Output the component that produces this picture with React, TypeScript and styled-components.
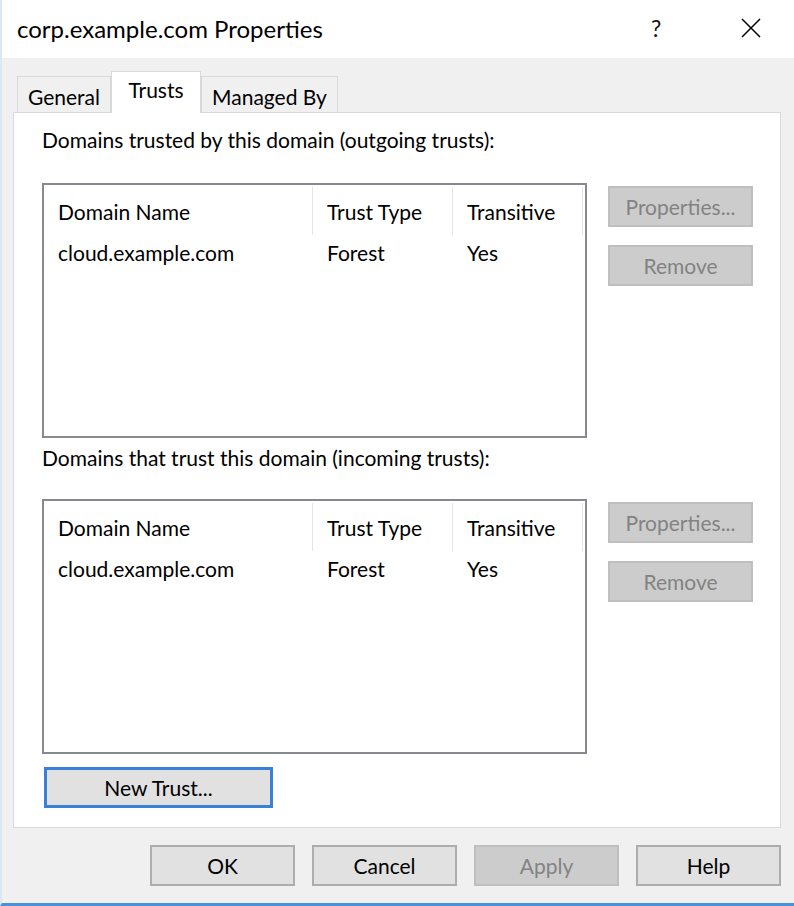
import React from 'react';
import styled, { createGlobalStyle } from 'styled-components';

const GlobalStyle = createGlobalStyle`
  html, body {
    margin: 0;
    padding: 0;
    background: #ffffff;
  }
  body {
    font-family: Lato, 'Liberation Sans', sans-serif;
    color: #000;
  }
  * {
    box-sizing: border-box;
  }
`;

type TrustRow = { name: string; type: string; transitive: string };

const outgoing: TrustRow[] = [{ name: 'cloud.example.com', type: 'Forest', transitive: 'Yes' }];
const incoming: TrustRow[] = [{ name: 'cloud.example.com', type: 'Forest', transitive: 'Yes' }];

const CloseIcon = () => (
  <svg width="20" height="20" viewBox="0 0 20 20">
    <path d="M1 1 L19 19 M19 1 L1 19" stroke="#000" strokeWidth="1.5" fill="none" />
  </svg>
);

const TrustList: React.FC<{ rows: TrustRow[] }> = ({ rows }) => (
  <ListBox>
    <HeaderRow>
      <HeaderCell $w={269}>Domain Name</HeaderCell>
      <HeaderCell $w={140}>Trust Type</HeaderCell>
      <HeaderCell $w={130}>Transitive</HeaderCell>
    </HeaderRow>
    {rows.map((r) => (
      <DataRow key={r.name}>
        <DataCell $w={269}>{r.name}</DataCell>
        <DataCell $w={140}>{r.type}</DataCell>
        <DataCell $w={130}>{r.transitive}</DataCell>
      </DataRow>
    ))}
  </ListBox>
);

const TrustSection: React.FC<{ rows: TrustRow[] }> = ({ rows }) => (
  <SectionRow>
    <TrustList rows={rows} />
    <SideButtons>
      <Button $disabled>Properties...</Button>
      <Button $disabled>Remove</Button>
    </SideButtons>
  </SectionRow>
);

const App: React.FC = () => {
  return (
    <>
      <GlobalStyle />
      <Window>
        <TitleBar>
          <Title>corp.example.com Properties</Title>
          <TitleControls>
            <HelpMark>?</HelpMark>
            <CloseBox>
              <CloseIcon />
            </CloseBox>
          </TitleControls>
        </TitleBar>
        <Body>
          <Tabs>
            <Tab $w={94}>General</Tab>
            <Tab $w={90} $active>
              Trusts
            </Tab>
            <Tab $w={137}>Managed By</Tab>
          </Tabs>
          <Panel>
            <Label>Domains trusted by this domain (outgoing trusts):</Label>
            <TrustSection rows={outgoing} />
            <Label $second>Domains that trust this domain (incoming trusts):</Label>
            <TrustSection rows={incoming} />
            <NewTrustButton>New Trust...</NewTrustButton>
          </Panel>
          <Footer>
            <Button>OK</Button>
            <Button>Cancel</Button>
            <Button $disabled>Apply</Button>
            <Button>Help</Button>
          </Footer>
        </Body>
      </Window>
    </>
  );
};

export default App;

// 창 전체
const Window = styled.div`
  width: 794px;
  height: 906px;
  display: flex;
  flex-direction: column;
  border-left: 2px solid #dbe7f4;
  border-bottom: 3px solid #4a90da;
  font-size: 21px;
`;

// 타이틀 바
const TitleBar = styled.div`
  height: 58px;
  flex-shrink: 0;
  background: #ffffff;
  display: flex;
  align-items: center;
  justify-content: space-between;
  padding: 0 33px 2px 15px;
`;

const Title = styled.div`
  font-size: 24px;
  color: #000;
`;

const TitleControls = styled.div`
  display: flex;
  align-items: center;
  gap: 80px;
`;

const HelpMark = styled.span`
  font-size: 23px;
  width: 10px;
  color: #111;
`;

const CloseBox = styled.span`
  display: flex;
  width: 20px;
  height: 20px;
`;

// 본문
const Body = styled.div`
  flex: 1;
  background: #f0f0f0;
  padding: 14px 13px 0 11px;
  display: flex;
  flex-direction: column;
`;

// 탭
const Tabs = styled.div`
  display: flex;
  align-items: flex-end;
  height: 41px;
  padding-left: 4px;
  margin-bottom: -1px;
  position: relative;
  z-index: 1;
`;

const Tab = styled.div<{ $active?: boolean; $w: number }>`
  width: ${(p) => p.$w}px;
  height: ${(p) => (p.$active ? '42px' : '37px')};
  padding-top: ${(p) => (p.$active ? '3px' : '5px')};
  text-align: center;
  background: ${(p) => (p.$active ? '#ffffff' : '#f0f0f0')};
  border: 1px solid #d9d9d9;
  border-bottom: ${(p) => (p.$active ? 'none' : '1px solid #d9d9d9')};
  position: relative;
  z-index: ${(p) => (p.$active ? 2 : 1)};
  line-height: 30px;
  font-size: 21px;
`;

// 탭 패널
const Panel = styled.div`
  width: 768px;
  height: 716px;
  background: #ffffff;
  border: 1px solid #d9d9d9;
  padding: 14px 0 0 28px;
  display: flex;
  flex-direction: column;
`;

const Label = styled.div<{ $second?: boolean }>`
  height: 26px;
  line-height: 26px;
  font-size: 21px;
  margin-top: ${(p) => (p.$second ? '7px' : '0')};
  margin-bottom: ${(p) => (p.$second ? '28px' : '30px')};
`;

const SectionRow = styled.div`
  display: flex;
  gap: 21px;
`;

// 목록 상자
const ListBox = styled.div`
  width: 545px;
  height: 255px;
  border: 2px solid #868a90;
  background: #ffffff;
`;

const HeaderRow = styled.div`
  display: flex;
  height: 50px;
  padding-top: 2px;
`;

const HeaderCell = styled.div<{ $w: number }>`
  width: ${(p) => p.$w}px;
  height: 48px;
  display: flex;
  align-items: center;
  padding-left: 14px;
  border-right: 1px solid #e5e5e5;
  font-size: 21px;
`;

const DataRow = styled.div`
  display: flex;
  height: 35px;
`;

const DataCell = styled.div<{ $w: number }>`
  width: ${(p) => p.$w}px;
  display: flex;
  align-items: center;
  padding-left: 14px;
  font-size: 21px;
`;

const SideButtons = styled.div`
  display: flex;
  flex-direction: column;
  gap: 18px;
  padding-top: 3px;
`;

// 버튼
const Button = styled.div<{ $disabled?: boolean }>`
  width: 145px;
  height: 41px;
  display: flex;
  align-items: center;
  justify-content: center;
  font-size: 21px;
  background: ${(p) => (p.$disabled ? '#cccccc' : '#e1e1e1')};
  border: 2px solid ${(p) => (p.$disabled ? '#bfbfbf' : '#adadad')};
  color: ${(p) => (p.$disabled ? '#838383' : '#000000')};
`;

const NewTrustButton = styled(Button)`
  width: 229px;
  margin: 13px 0 0 2px;
  border: 3px solid #3a80d6;
`;

const Footer = styled.div`
  display: flex;
  justify-content: flex-end;
  gap: 17px;
  margin-top: 17px;
`;
